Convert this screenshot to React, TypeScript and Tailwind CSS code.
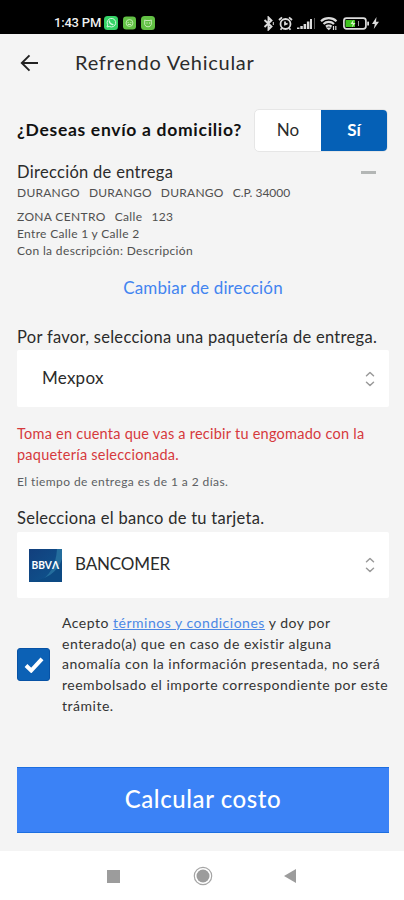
import { useState, type ReactNode } from 'react';
import { clsx } from 'clsx';

function StatusBar() {
  return (
    <div className="h-[34px] shrink-0 bg-black flex items-start justify-between pt-[15px] pl-[54px] pr-[25px]">
      <div className="flex items-center h-4">
        <span className="w-[50px] whitespace-nowrap font-['Roboto'] font-medium text-[13px] tracking-[-0.2px] text-white/95">
          1:43 PM
        </span>
        <svg className="w-[14px] h-[14px]" viewBox="0 0 14 14" fill="none">
          <rect width="14" height="14" rx="3.5" fill="#35d366" />
          <path d="M3 11l.7-2.2A4.3 4.3 0 1 1 5.300 10.4z" stroke="#d5f7df" strokeWidth="1" />
          <path d="M5.300 5c.2 2 1.600 3.400 3.600 3.700" stroke="#d5f7df" strokeWidth="1.300" strokeLinecap="round" />
        </svg>
        <svg className="ml-[5px] w-[13px] h-[14px]" viewBox="0 0 14 14" fill="none">
          <rect width="14" height="14" rx="3.5" fill="#62c044" />
          <circle cx="7" cy="7" r="3.700" stroke="#c5eab6" />
          <path d="M5 6.500h1m2 0h1M5.200 8.500h3.600" stroke="#dff5d6" />
        </svg>
        <svg className="ml-[5px] w-[14px] h-[14px]" viewBox="0 0 14 14" fill="none">
          <rect width="14" height="14" rx="3.5" fill="#62c044" />
          <path d="M3.700 4l1.300.5h4l1.300-.5v4.500A3.300 3.300 0 0 1 7 10.800a3.300 3.300 0 0 1-3.300-2.300z" stroke="#c5eab6" />
          <path d="M5.500 7h1m1.500 0h1" stroke="#dff5d6" />
        </svg>
      </div>

      <div className="flex items-center h-4 text-[#dcdcdc]">
        <svg className="w-[11px] h-[15px]" viewBox="0 0 11 15" fill="none" stroke="currentColor" strokeWidth="1.900">
          <path d="M1.500 4l7 6.500L5.500 13.500v-12l3 3L1.500 11" />
          <path d="M10.300 6v3" strokeWidth="1" />
        </svg>
        <svg className="ml-[4px] w-[15px] h-[15px]" viewBox="0 0 15 15" fill="none" stroke="currentColor" strokeWidth="1.800">
          <circle cx="7.500" cy="8" r="5" />
          <path d="M1 4l3-2.700M14 4l-3-2.700M7 5.500v3l2.600-1M3.800 12.200l-1.300 1.600M11.200 12.200l1.300 1.600" />
        </svg>
        <svg className="ml-[4px] w-[19px] h-[13px]" viewBox="0 0 19 13" fill="currentColor">
          <path d="M0 10.500h2.500V12H0zM3.300 9h2.500v3h-2.500zM6.600 7h2.500v5h-2.500zM9.900 4.500h2.500V12h-2.500zM13 2h2v10h-2z" />
          <path d="M17 1h1v11h-1z" opacity=".4" />
        </svg>
        <svg className="ml-[4px] w-[18px] h-[15px]" viewBox="0 0 18 15" fill="none" stroke="currentColor" strokeWidth="2.200">
          <path d="M1 5.200a11.500 11.500 0 0 1 15.500 0M3.500 8a7.800 7.800 0 0 1 10.500 0M6 10.600a4 4 0 0 1 5.500 0" />
          <path d="M7.300 12h3L8.800 13.500zM13.500 10v4M15.800 10v4" strokeWidth="1.200" />
        </svg>
        <svg className="ml-[5px] w-[26px] h-[13px]" viewBox="0 0 26 13" fill="none">
          <rect x=".9" y="1.200" width="22" height="10.600" rx="2.600" stroke="currentColor" strokeWidth="1.700" />
          <rect x="24.200" y="4.500" width="1.800" height="4" rx=".6" fill="currentColor" />
          <rect x="2.500" y="3" width="9.500" height="7" fill="#3fc41e" />
          <path d="M10.500 2.800L7.500 7h2.300l-1 3.500L12.500 6H10z" fill="#d3f2c6" />
          <path d="M15.500 4v5" stroke="#999" />
        </svg>
        <svg className="ml-[3px] w-[7px] h-[12px]" viewBox="0 0 7 12" fill="currentColor">
          <path d="M4.500 0L0 7h2.800L1.800 12 7 4.800H4z" />
        </svg>
      </div>
    </div>
  );
}

function UpDown() {
  return (
    <svg
      className="w-[10px] h-[16px]"
      viewBox="0 0 10 16"
      fill="none"
      stroke="#9a9a9a"
      strokeWidth="1.500"
      strokeLinecap="round"
      strokeLinejoin="round"
    >
      <path d="M1.500 4.800L5 1.500 8.500 4.800M1.500 11.200L5 14.500 8.500 11.200" />
    </svg>
  );
}

function SelectBox({ className, children }: { className: string; children: ReactNode }) {
  return (
    <button
      type="button"
      className={clsx('flex w-full items-center justify-between rounded-[2px] bg-white pr-[14px]', className)}
    >
      <span className="flex items-center">{children}</span>
      <UpDown />
    </button>
  );
}

function BankLogo() {
  return (
    <svg className="w-[33px] h-[33px]" viewBox="0 0 33 33">
      <defs>
        <linearGradient id="bank-bg" x1="0" y1="0" x2="1" y2="1">
          <stop offset="0" stopColor="#123f7d" />
          <stop offset="1" stopColor="#0e568f" />
        </linearGradient>
      </defs>
      <rect width="33" height="33" fill="url(#bank-bg)" />
      <path d="M33 0v33H10C20 27 27 17 28 0z" fill="#246d9d" />
      <path d="M0 33C17 31 29 23 33 10v23z" fill="#0d4a83" />
      <text
        x="2.500"
        y="19.800"
        fill="#fff"
        fontFamily="Lato, sans-serif"
        fontSize="10.500"
        fontWeight="700"
        textLength="27.500"
        lengthAdjust="spacingAndGlyphs"
      >
        BBVΛ
      </text>
    </svg>
  );
}

export default function App() {
  const [delivery, setDelivery] = useState(true);
  const [accepted, setAccepted] = useState(true);

  return (
    <div className="flex h-[900px] w-[404px] flex-col overflow-hidden bg-[#f4f4f4] font-['Lato',sans-serif] text-[#2b2b2b]">
      <StatusBar />

      {/* Header */}
      <header className="flex h-[58px] shrink-0 items-center pl-[20px]">
        <svg className="w-[19px] h-[18px]" viewBox="0 0 19 18" fill="none" stroke="#222" strokeWidth="1.900">
          <path d="M18 9H2M9.500 1.300L1.800 9l7.700 7.700" />
        </svg>
        <h1 className="ml-[36px] whitespace-nowrap pb-[2px] text-[20px] tracking-[0.75px]">Refrendo Vehicular</h1>
      </header>

      <main className="flex flex-1 flex-col whitespace-nowrap pl-[17px] pr-[15px] pt-[17px]">
        {/* Delivery toggle */}
        <div className="flex h-[43px] items-center justify-between">
          <h2 className="text-[17.500px] font-bold tracking-[0.7px] text-[#111]">¿Deseas envío a domicilio?</h2>
          <div className="mr-px flex h-[43px] w-[134px] overflow-hidden rounded-[5px] border border-[#e6e6e6] bg-white text-[17px]">
            <button
              type="button"
              onClick={() => setDelivery(false)}
              className={clsx('flex-1 pb-[2px]', !delivery && 'bg-[#0560b6] font-bold text-white')}
            >
              No
            </button>
            <button
              type="button"
              onClick={() => setDelivery(true)}
              className={clsx('flex-1 pb-[2px]', delivery && 'bg-[#0560b6] font-bold text-white')}
            >
              Sí
            </button>
          </div>
        </div>

        {/* Address */}
        <div className="mt-[9px] flex h-[22px] items-center justify-between">
          <h3 className="text-[16.500px] tracking-[0.3px]">Dirección de entrega</h3>
          <span className="mr-[13px] h-[3px] w-[15px] bg-[#b3b6b5]" />
        </div>
        <div className="flex h-5 items-center gap-[9px] text-[12px] tracking-[0.25px] text-[#505050]">
          <span>DURANGO</span>
          <span>DURANGO</span>
          <span>DURANGO</span>
          <span className="tracking-[0]">C.P. 34000</span>
        </div>
        <div className="mt-[5px] flex h-[17px] items-center gap-[9px] text-[12px] tracking-[0.35px] text-[#505050]">
          <span>ZONA CENTRO</span>
          <span>Calle</span>
          <span>123</span>
        </div>
        <p className="text-[12px] leading-[17px] tracking-[0.33px] text-[#505050]">Entre Calle 1 y Calle 2</p>
        <p className="text-[12px] leading-[17px] tracking-[0.36px] text-[#505050]">Con la descripción: Descripción</p>

        <a className="mt-[17px] self-center text-[17px] leading-[24px] tracking-[0.15px] text-[#4284f0]">
          Cambiar de dirección
        </a>

        {/* Courier */}
        <p className="mt-[26px] text-[16.500px] leading-[23px] tracking-[0.3px]">
          Por favor, selecciona una paquetería de entrega.
        </p>
        <SelectBox className="mt-[1px] h-[57px] pl-[25px]">
          <span className="pb-[2px] text-[17px] tracking-[0.25px]">Mexpox</span>
        </SelectBox>

        <p className="mt-[17px] text-[14.500px] leading-[20.500px] tracking-[0.24px] text-[#d6393c]">
          Toma en cuenta que vas a recibir tu engomado con la
          <br />
          paquetería seleccionada.
        </p>
        <p className="mt-[8px] text-[12px] leading-[17px] tracking-[0.42px] text-[#5c5f63]">
          El tiempo de entrega es de 1 a 2 días.
        </p>

        {/* Bank */}
        <p className="mt-[17px] text-[16.500px] leading-[23px] tracking-[0.28px]">Selecciona el banco de tu tarjeta.</p>
        <SelectBox className="mt-[2px] h-[66px] pl-[12px]">
          <BankLogo />
          <span className="ml-[13px] pb-[2px] text-[17px] tracking-[-0.15px]">BANCOMER</span>
        </SelectBox>

        {/* Terms */}
        <div className="mt-[15px] flex items-center">
          <button
            type="button"
            onClick={() => setAccepted(!accepted)}
            className="flex h-[33px] w-[33px] shrink-0 items-center justify-center rounded-[3px] border border-[#0752a5] bg-[#0c61b5]"
          >
            {accepted && (
              <svg className="w-[20px] h-[16px]" viewBox="0 0 20 16" fill="none" stroke="#fff" strokeWidth="4">
                <path d="M2 8.500l5.200 5L18 1.800" />
              </svg>
            )}
          </button>
          <p className="ml-[12px] text-[14px] leading-[20.700px] tracking-[0.51px] text-[#333]">
            Acepto <a className="text-[#4c88e5] underline">términos y condiciones</a> y doy por
            <br />
            enterado(a) que en caso de existir alguna
            <br />
            anomalía con la información presentada, no será
            <br />
            reembolsado el importe correspondiente por este
            <br />
            trámite.
          </p>
        </div>

        <button
          type="button"
          className="mt-auto mb-[18px] h-[66px] w-full shrink-0 border-y border-[#1c6ee0] bg-[#3b82f6] pb-[2px] text-[24px] font-medium tracking-[0.6px] text-white"
        >
          Calcular costo
        </button>
      </main>

      {/* Android navigation */}
      <nav className="flex h-[49px] shrink-0 items-center bg-white pl-[107px] pt-[1px]">
        <span className="h-[13px] w-[13px] bg-[#9c9c9c]" />
        <svg className="ml-[73px] h-[20px] w-[20px]" viewBox="0 0 20 20" fill="none">
          <circle cx="10" cy="10" r="8.700" stroke="#a5a5a5" strokeWidth="1.200" />
          <circle cx="10" cy="10" r="6.500" fill="#9c9c9c" />
        </svg>
        <svg className="ml-[71px] h-[14px] w-[12px]" viewBox="0 0 12 14" fill="#9c9c9c">
          <path d="M12 0v14L0 7z" />
        </svg>
      </nav>
    </div>
  );
}
